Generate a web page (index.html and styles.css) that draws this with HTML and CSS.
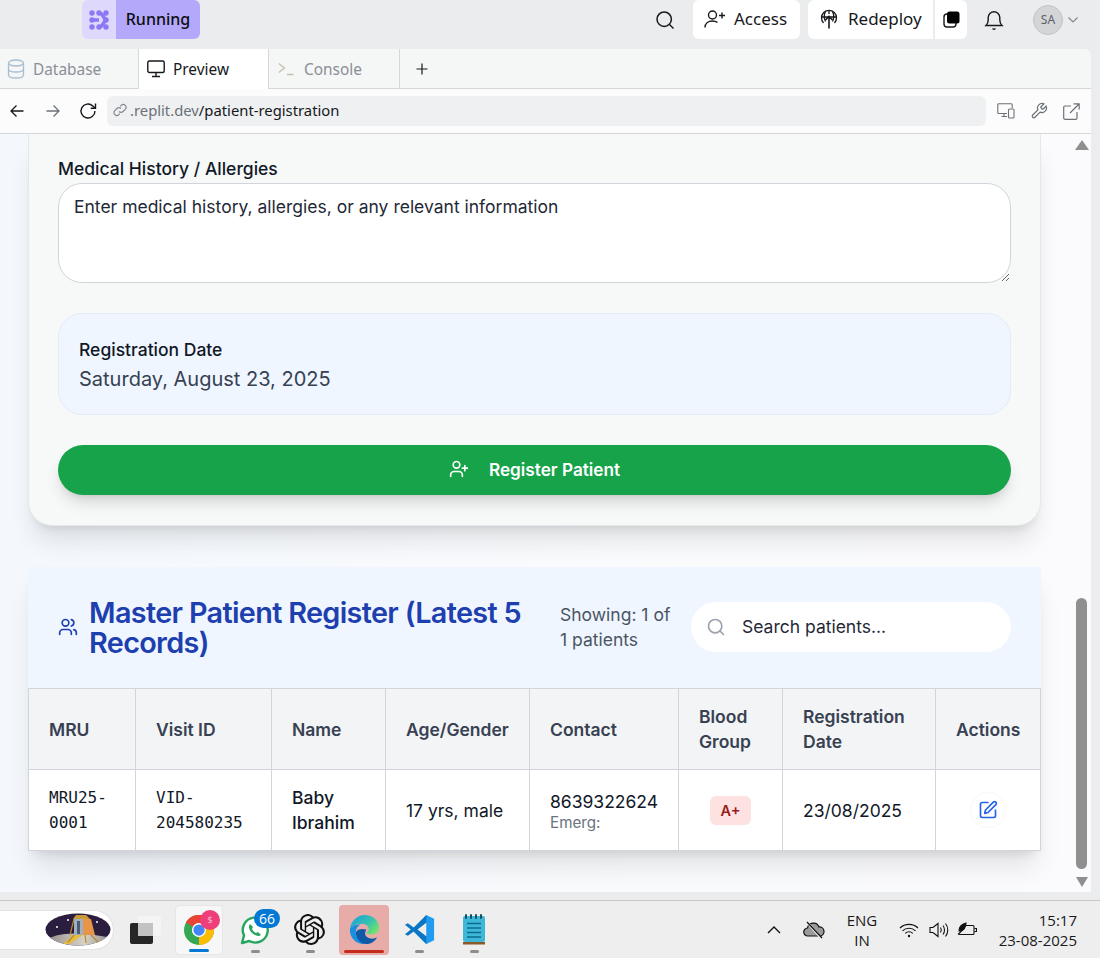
FILE: index.html
```html
<!DOCTYPE html>
<html lang="en">
<head>
  <meta charset="UTF-8" />
  <title>Patient Registration</title>
  <link rel="stylesheet" href="styles.css">
</head>
<body>
  <header class="topbar">
    <div class="run-group">
      <span class="run-logo">
        <svg width="20" height="20" viewBox="0 0 20 20" fill="#8b78f5">
          <circle cx="3" cy="3" r="2.700"/><circle cx="10" cy="3" r="2.700"/><circle cx="17" cy="3" r="2.700"/>
          <circle cx="3" cy="10" r="2.700"/><circle cx="17" cy="10" r="2.700"/>
          <circle cx="3" cy="17" r="2.700"/><circle cx="10" cy="17" r="2.700"/><circle cx="17" cy="17" r="2.700"/>
          <path d="M10 3c4 0 3.500 4 7 7-3.500 3-3 7-7 7M3 10h7" fill="none" stroke="#8b78f5" stroke-width="3.600"/>
        </svg>
      </span>
      <span class="run-label">Running</span>
    </div>
    <div class="top-actions">
      <svg class="top-search" width="20" height="20" viewBox="0 0 20 20" fill="none" stroke="#16181c" stroke-width="1.5"><circle cx="9.200" cy="9.200" r="7.200"/><path d="M14.500 14.500l4 4"/></svg>
      <button class="top-btn access">
        <svg width="22" height="20" viewBox="0 0 22 20" fill="none" stroke="#16181c" stroke-width="1.400"><circle cx="8.500" cy="6" r="4"/><path d="M1 18.500c0-4 3-6.500 7.500-6.500 2 0 3.600.5 5 1.400"/><path d="M15 6.500h6M18 3.500v6"/></svg>
        Access
      </button>
      <div class="deploy-group">
        <button class="top-btn redeploy">
          <svg width="18" height="20" viewBox="0 0 18 20" fill="none" stroke="#16181c" stroke-width="1.300"><path d="M3.500 14a7.500 7.500 0 1 1 11 0"/><path d="M1.500 8h15M5.500 2.500c-1.500 3-1.500 7 0 10M12.500 2.500c1.500 3 1.500 7 0 10M9 1v4"/><path d="M9 19.500V7.500M5.500 11L9 7.500l3.500 3.500" stroke-width="1.600"/></svg>
          Redeploy
        </button>
        <button class="top-btn stack">
          <svg width="17" height="17" viewBox="0 0 17 17"><rect x="1" y="3" width="12" height="13" rx="3" fill="#fff" stroke="#16181c" stroke-width="1.400"/><rect x="4" y="0.500" width="12.500" height="12" rx="2.500" fill="#000"/></svg>
        </button>
      </div>
      <svg class="bell" width="20" height="22" viewBox="0 0 20 22" fill="none" stroke="#16181c" stroke-width="1.400"><path d="M2 16.500c1.500-1.500 2.200-3 2.200-5.500V8.500a5.800 5.800 0 0 1 11.600 0V11c0 2.500.7 4 2.200 5.500z"/><path d="M8.500 19.500c.5 1 2.500 1 3 0"/></svg>
      <span class="avatar">SA</span>
      <svg class="caret" width="10" height="6" viewBox="0 0 10 6" fill="none" stroke="#80858d" stroke-width="1.100"><path d="M.5.500L5 5 9.500.5"/></svg>
    </div>
  </header>

  <div class="frame">
    <nav class="tabs">
      <div class="tab tab-db">
        <svg width="18" height="20" viewBox="0 0 18 20" fill="none" stroke="#a9bed3" stroke-width="1.300"><ellipse cx="9" cy="4" rx="7.500" ry="3"/><path d="M1.500 4v12c0 1.700 3.400 3 7.500 3s7.500-1.300 7.500-3V4M1.500 10c0 1.700 3.400 3 7.500 3s7.500-1.300 7.500-3"/></svg>
        Database
      </div>
      <div class="tab tab-active">
        <svg width="18" height="18" viewBox="0 0 18 18" fill="none" stroke="#16181c" stroke-width="1.400"><rect x=".8" y="1" width="16.400" height="11.500" rx="1.500"/><path d="M9 12.500V16M5 16.500h8"/></svg>
        Preview
      </div>
      <div class="tab tab-console">
        <svg width="16" height="14" viewBox="0 0 16 14" fill="none" stroke="#c3c0ae" stroke-width="1.300"><path d="M.8 1.500L6.500 6 .8 10.500M9 12.500h6.500"/></svg>
        Console
      </div>
      <div class="tab-add">
        <svg width="12" height="12" viewBox="0 0 12 12" stroke="#16181c" stroke-width="1.200"><path d="M6 .5v11M.5 6h11"/></svg>
      </div>
    </nav>

    <div class="urlbar">
      <svg class="nav-icon" width="14" height="14" viewBox="0 0 14 14" fill="none" stroke="#16181c" stroke-width="1.300"><path d="M13.500 7H1M6.500 1.500L1 7l5.500 5.500"/></svg>
      <svg class="nav-icon nav-fwd" width="14" height="14" viewBox="0 0 14 14" fill="none" stroke="#6c7178" stroke-width="1.300"><path d="M.5 7H13M7.500 1.500L13 7l-5.500 5.500"/></svg>
      <svg class="nav-icon nav-reload" width="18" height="18" viewBox="0 0 18 18" fill="none" stroke="#16181c" stroke-width="1.400"><path d="M16 9a7 7 0 1 1-2.200-5.100L16 6"/><path d="M16.500 1.500V6.300h-4.800"/></svg>
      <div class="url-field">
        <svg width="14" height="14" viewBox="0 0 14 14" fill="none" stroke="#858a92" stroke-width="1.200"><path d="M6 8.500a2.800 2.800 0 0 0 4 0l2.200-2.200a2.800 2.800 0 0 0-4-4L7.200 3.300"/><path d="M8 5.500a2.800 2.800 0 0 0-4 0L1.800 7.700a2.800 2.800 0 0 0 4 4l1-1"/></svg>
        <span class="url-host">.replit.dev</span><span class="url-path">/patient-registration</span>
      </div>
      <div class="url-tools">
        <svg width="18" height="16" viewBox="0 0 18 16" fill="none" stroke="#6c7178" stroke-width="1.100"><path d="M10 10.500H1.800a1 1 0 0 1-1-1V1.700a1 1 0 0 1 1-1h12.400a1 1 0 0 1 1 1V5M7 11v2.500M4.500 13.500H10"/><rect x="11.500" y="6" width="5.500" height="9" rx="1"/></svg>
        <svg width="18" height="18" viewBox="0 0 24 24" fill="none" stroke="#6c7178" stroke-width="1.600"><path d="M14.700 6.300a1 1 0 0 0 0 1.400l1.600 1.600a1 1 0 0 0 1.400 0l3.770-3.770a6 6 0 0 1-7.940 7.940l-6.910 6.910a2.120 2.120 0 0 1-3-3l6.910-6.910a6 6 0 0 1 7.940-7.940z"/></svg>
        <svg width="17" height="17" viewBox="0 0 17 17" fill="none" stroke="#6c7178" stroke-width="1.200"><path d="M8 3H2a1.300 1.300 0 0 0-1.300 1.300V15A1.300 1.300 0 0 0 2 16.300h10.700A1.300 1.300 0 0 0 14 15V9M7 10L16 1M10.500.8h5.700v5.700"/></svg>
      </div>
    </div>

    <div class="viewport">
      <main class="page">
        <section class="form-card">
          <label class="field-label">Medical History / Allergies</label>
          <textarea class="history" placeholder="Enter medical history, allergies, or any relevant information"></textarea>
          <div class="date-box">
            <div class="date-label">Registration Date</div>
            <div class="date-value">Saturday, August 23, 2025</div>
          </div>
          <button class="submit">
            <svg width="20" height="20" viewBox="0 0 24 24" fill="none" stroke="#fff" stroke-width="2" stroke-linecap="round" stroke-linejoin="round"><path d="M16 21v-2a4 4 0 0 0-4-4H6a4 4 0 0 0-4 4v2"/><circle cx="9" cy="7" r="4"/><path d="M19 8v6M22 11h-6"/></svg>
            Register Patient
          </button>
        </section>

        <section class="register">
          <div class="register-head">
            <svg class="users" width="20" height="20" viewBox="0 0 24 24" fill="none" stroke="#1e40af" stroke-width="2" stroke-linecap="round" stroke-linejoin="round"><path d="M16 21v-2a4 4 0 0 0-4-4H6a4 4 0 0 0-4 4v2"/><circle cx="9" cy="7" r="4"/><path d="M22 21v-2a4 4 0 0 0-3-3.870M16 3.130a4 4 0 0 1 0 7.750"/></svg>
            <h2>Master Patient Register (Latest 5 Records)</h2>
            <p class="showing">Showing: 1 of 1 patients</p>
            <div class="search">
              <svg width="20" height="20" viewBox="0 0 24 24" fill="none" stroke="#9ca3af" stroke-width="2" stroke-linecap="round"><circle cx="11" cy="11" r="8"/><path d="M21 21l-4.300-4.300"/></svg>
              <span>Search patients...</span>
            </div>
          </div>
          <table class="patients">
            <colgroup>
              <col class="c-mru"><col class="c-visit"><col class="c-name"><col class="c-age">
              <col class="c-contact"><col class="c-blood"><col class="c-date"><col class="c-act">
            </colgroup>
            <thead>
              <tr>
                <th>MRU</th><th>Visit ID</th><th>Name</th><th>Age/Gender</th>
                <th>Contact</th><th>Blood Group</th><th>Registration Date</th><th>Actions</th>
              </tr>
            </thead>
            <tbody>
              <tr>
                <td class="mono">MRU25-0001</td>
                <td class="mono">VID-204580235</td>
                <td class="name">Baby Ibrahim</td>
                <td>17 yrs, male</td>
                <td class="contact">8639322624<small>Emerg:</small></td>
                <td class="blood"><span class="blood-tag">A+</span></td>
                <td>23/08/2025</td>
                <td class="actions">
                  <span class="edit-btn">
                    <svg width="20" height="20" viewBox="0 0 24 24" fill="none" stroke="#2563eb" stroke-width="2" stroke-linecap="round" stroke-linejoin="round"><path d="M12 3H5a2 2 0 0 0-2 2v14a2 2 0 0 0 2 2h14a2 2 0 0 0 2-2v-7"/><path d="M18.400 2.600a2.120 2.120 0 0 1 3 3L12 15l-4 1 1-4z"/></svg>
                  </span>
                </td>
              </tr>
            </tbody>
          </table>
        </section>
      </main>
      <aside class="scroll">
        <span class="arrow-up"></span>
        <span class="thumb"></span>
        <span class="arrow-down"></span>
      </aside>
    </div>
  </div>

  <footer class="taskbar">
    <div class="search-pill">
      <svg width="66" height="33" viewBox="0 0 66 33">
        <defs>
          <clipPath id="moonClip"><ellipse cx="33" cy="16.500" rx="32.500" ry="16"/></clipPath>
          <linearGradient id="moonGrad" x1="0" y1="0" x2="1" y2="0"><stop offset="0" stop-color="#8e8a8a"/><stop offset=".6" stop-color="#d8d2c6"/><stop offset="1" stop-color="#8d8a8c"/></linearGradient>
        </defs>
        <g clip-path="url(#moonClip)">
          <rect width="66" height="33" fill="#2a1d3d"/>
          <path d="M0 28C8 21 30 17 66 25v8H0z" fill="url(#moonGrad)"/>
          <circle cx="12" cy="14" r="1" fill="#fff"/><circle cx="23" cy="7" r="1" fill="#fff"/><circle cx="52" cy="9" r="1" fill="#fff"/>
          <path d="M31 2h10l4 4H28z" fill="#c99a3a"/>
          <path d="M38 6h8l4 16H38z" fill="#e8954a"/>
          <rect x="29" y="6" width="9" height="16" fill="#9fb0c0"/>
          <rect x="32" y="8" width="3" height="13" fill="#4d5b73"/>
          <path d="M28 22h10L24 31h-6z" fill="#e6bb3c"/>
          <path d="M29 6l-4 16M29 22l-6 7M46 22l8 8M40 22l1 8" stroke="#b98a2c" stroke-width="1.200" fill="none"/>
        </g>
      </svg>
    </div>
    <svg class="task-view" width="32" height="32" viewBox="0 0 32 32">
      <rect x="0" y="9" width="23" height="21" rx="2" fill="#262626"/>
      <rect x="8" y="2" width="23" height="20" rx="2" fill="#f4f4f4"/>
      <rect x="8" y="9" width="15" height="13" fill="#c2c2c2"/>
    </svg>
    <div class="apps">
      <div class="app app-chrome">
        <svg width="30" height="30" viewBox="0 0 32 32" fill="none">
          <circle cx="16" cy="16" r="11.500" stroke="#34a853" stroke-width="9"/>
          <path d="M6 10.200A11.500 11.500 0 0 1 26 10.200" stroke="#ea4335" stroke-width="9"/>
          <path d="M26 10.200A11.500 11.500 0 0 1 16 27.500" stroke="#fbbc04" stroke-width="9"/>
          <circle cx="16" cy="16" r="7.500" fill="#fff"/>
          <circle cx="16" cy="16" r="6" fill="#4285f4"/>
        </svg>
        <span class="dot-badge">$</span>
        <span class="pin pin-blue"></span>
      </div>
      <div class="app app-plain">
        <svg width="32" height="32" viewBox="0 0 32 32" fill="none">
          <path d="M3 29l2-7.500A12.500 12.500 0 1 1 10.200 27z" fill="#fff" stroke="#25a55f" stroke-width="2.400" stroke-linejoin="round"/>
          <path d="M11 10c-2 2-1 6 2 9s7 4 9 2l-3-3-2 1c-2-1-3-2-4-4l1-2z" fill="#25a55f"/>
        </svg>
        <span class="count-badge">66</span>
        <span class="pin"></span>
      </div>
      <div class="app app-plain">
        <svg width="31" height="31" viewBox="0 0 24 24" fill="#111">
          <path d="M22.282 9.821a5.985 5.985 0 0 0-.516-4.91 6.046 6.046 0 0 0-6.51-2.9A6.065 6.065 0 0 0 4.981 4.18a5.985 5.985 0 0 0-3.998 2.9 6.046 6.046 0 0 0 .743 7.097 5.98 5.98 0 0 0 .51 4.911 6.051 6.051 0 0 0 6.515 2.9A5.985 5.985 0 0 0 13.26 24a6.056 6.056 0 0 0 5.772-4.206 5.99 5.99 0 0 0 3.997-2.9 6.056 6.056 0 0 0-.747-7.073zM13.26 22.43a4.476 4.476 0 0 1-2.876-1.04l.141-.081 4.779-2.758a.795.795 0 0 0 .392-.681v-6.737l2.02 1.168a.071.071 0 0 1 .038.052v5.583a4.504 4.504 0 0 1-4.494 4.494zM3.6 18.304a4.47 4.47 0 0 1-.535-3.014l.142.085 4.783 2.759a.771.771 0 0 0 .78 0l5.843-3.369v2.332a.08.08 0 0 1-.033.062L9.74 19.95a4.5 4.5 0 0 1-6.14-1.646zM2.34 7.896a4.485 4.485 0 0 1 2.366-1.973V11.6a.766.766 0 0 0 .388.676l5.815 3.355-2.02 1.168a.076.076 0 0 1-.071 0l-4.83-2.786A4.504 4.504 0 0 1 2.34 7.872zm16.597 3.855l-5.833-3.387L15.119 7.2a.076.076 0 0 1 .071 0l4.83 2.791a4.494 4.494 0 0 1-.676 8.105v-5.678a.79.79 0 0 0-.407-.667zm2.01-3.023l-.141-.085-4.774-2.782a.776.776 0 0 0-.785 0L9.409 9.23V6.897a.066.066 0 0 1 .028-.061l4.83-2.787a4.5 4.5 0 0 1 6.68 4.66zm-12.64 4.135l-2.02-1.164a.08.08 0 0 1-.038-.057V6.075a4.5 4.5 0 0 1 7.375-3.453l-.142.08L8.704 5.46a.795.795 0 0 0-.393.681zm1.097-2.365l2.602-1.5 2.607 1.5v2.999l-2.597 1.5-2.607-1.5z"/>
        </svg>
        <span class="pin"></span>
      </div>
      <div class="app app-edge">
        <svg width="31" height="31" viewBox="0 0 32 32">
          <defs><linearGradient id="edgeTop" x1="0" y1="0" x2="1" y2=".7"><stop offset="0" stop-color="#1b9de2"/><stop offset=".6" stop-color="#35c1b0"/><stop offset="1" stop-color="#6fe36a"/></linearGradient></defs>
          <path d="M1 15C2 7 9 1 16 1c9 0 15 6 15 13 0 5-4 7-8 7-3 0-5-1-5-2 2-1 3-3 2-5-1-3-4-4-7-4-5 0-9 2-12 5z" fill="url(#edgeTop)"/>
          <path d="M1 15c2-3 7-5 11-4-3 1-5 4-5 8 0 5 4 10 10 12-1 0-1 0-2 0C7 31 0 24 1 15z" fill="#1a8fe0"/>
          <path d="M7 19c0 6 5 12 11 12 5 0 9-3 11-7-3 2-7 2-10 0-3-2-3-5-1-8-4-1-9-1-11 3z" fill="#0f5aa8"/>
        </svg>
        <span class="pin pin-red"></span>
      </div>
      <div class="app app-plain app-vs">
        <svg width="31" height="31" viewBox="0 0 32 32">
          <path d="M23 1l8 4v22l-8 4-13-13z" fill="#1f9cf0"/>
          <path d="M23 1L10 14 4 9.500 1 11l6 5-6 5 3 1.500L10 18l13 13z" fill="#0a76c4"/>
          <path d="M23 9v14l-9-7z" fill="#eeeeee"/>
        </svg>
        <span class="pin"></span>
      </div>
      <div class="app app-plain app-note">
        <svg width="24" height="32" viewBox="0 0 24 32">
          <rect x="1" y="2" width="22" height="26" rx="2" fill="#3fb7d8"/>
          <path d="M1 28h22v2.500H1z" fill="#8b5a2b"/>
          <path d="M5 9.500h14M5 14h14M5 18.500h14M5 23h14" stroke="#0b6d8c" stroke-width="1.600"/>
          <path d="M4 1v3M9 1v3M14 1v3M19 1v3" stroke="#13505f" stroke-width="2" stroke-linecap="round"/>
        </svg>
        <span class="pin"></span>
      </div>
    </div>
    <div class="tray">
      <svg class="tray-caret" width="14" height="8" viewBox="0 0 14 8" fill="none" stroke="#111" stroke-width="1.400"><path d="M1 7l6-6 6 6"/></svg>
      <svg class="tray-cloud" width="22" height="18" viewBox="0 0 22 18"><path d="M5 15a4 4 0 0 1-.5-8A6 6 0 0 1 16 6a4.500 4.500 0 0 1 1 9z" fill="#9a9a9a" stroke="#111" stroke-width="1.200"/><path d="M4 1l14 16" stroke="#eee" stroke-width="2.600"/><path d="M4 1l15 16" stroke="#111" stroke-width="1.200"/></svg>
      <div class="lang">ENG<br>IN</div>
      <svg class="tray-wifi" width="20" height="16" viewBox="0 0 20 16" fill="none" stroke="#111" stroke-width="1.100"><path d="M1 6a13 13 0 0 1 18 0M3.500 8.800a9.500 9.500 0 0 1 13 0M6.200 11.300a5.500 5.500 0 0 1 7.600 0"/><circle cx="10" cy="14" r="1.200" fill="#111" stroke="none"/></svg>
      <svg class="tray-vol" width="20" height="16" viewBox="0 0 20 16" fill="none" stroke="#111" stroke-width="1.100"><path d="M1 5.500h3L9 1.500v13l-5-4H1z"/><path d="M11.500 5.500c1 1.500 1 3.500 0 5M14 3.500c2 2.500 2 6.500 0 9M16.500 1.500c3 3.500 3 9.500 0 13"/></svg>
      <svg class="tray-batt" width="20" height="16" viewBox="0 0 20 16" fill="none" stroke="#111" stroke-width="1.100"><path d="M9 3.500h7a1 1 0 0 1 1 1v7a1 1 0 0 1-1 1H2"/><path d="M17.500 6.500h2v3h-2"/><path d="M2 9C2 5 5 2 9 1c0 4-2 7-6 8z" fill="#111"/><path d="M1 12.500l6-6"/></svg>
      <div class="clock"><div>15:17</div><div>23-08-2025</div></div>
    </div>
  </footer>
</body>
</html>
```

FILE: styles.css
```css
* {
  box-sizing: border-box;
}

html,
body {
  margin: 0;
  height: 958px;
  overflow: hidden;
}

body {
  display: flex;
  flex-direction: column;
  background: #ebecee;
  font-family: 'Inter', sans-serif;
  color: #111827;
}

button {
  border: none;
  font: inherit;
}

/* top bar */
.topbar {
  height: 49px;
  flex: none;
  display: flex;
  justify-content: space-between;
  font-family: 'Noto Sans', sans-serif;
  padding: 0 22px 10px 82px;
}

.run-group {
  display: flex;
}

.run-logo {
  width: 34px;
  background: #ded9fc;
  border-radius: 6px 0 0 6px;
  display: flex;
  align-items: center;
  justify-content: center;
}

.run-label {
  width: 84px;
  background: #b4a8fb;
  border-radius: 0 6px 6px 0;
  display: flex;
  align-items: center;
  justify-content: center;
  padding-bottom: 2px;
  font-size: 16px;
  font-weight: 500;
  color: #0c0d10;
}

.top-actions {
  display: flex;
  align-items: center;
}

.top-search {
  margin-right: 18px;
}

.top-btn {
  height: 39px;
  background: #fff;
  display: flex;
  align-items: center;
  gap: 8px;
  color: #16181c;
  font-size: 17px;
  padding: 0;
}

.access {
  width: 107px;
  border-radius: 6px;
  padding: 0 0 2px 11px;
  margin-right: 8px;
}

.deploy-group {
  display: flex;
  gap: 2px;
  margin-right: 17px;
}

.redeploy {
  width: 125px;
  border-radius: 6px 0 0 6px;
  padding: 0 0 2px 12px;
  gap: 10px;
}

.stack {
  width: 32px;
  border-radius: 0 6px 6px 0;
  justify-content: center;
}

.avatar {
  width: 30px;
  height: 30px;
  margin-left: 29px;
  border-radius: 50%;
  background: #d4d5d7;
  border: 1px solid #c2c3c6;
  color: #5c6067;
  font-size: 12px;
  display: flex;
  align-items: center;
  justify-content: center;
}

.caret {
  margin-left: 5px;
}

/* replit pane */
.frame {
  width: 1091px;
  height: 843px;
  flex: none;
  display: flex;
  flex-direction: column;
  background: #f5f6f6;
  border-radius: 0 6px 0 0;
  font-family: 'Noto Sans', sans-serif;
}

.tabs {
  height: 40px;
  flex: none;
  display: flex;
  border-bottom: 1px solid #d6d7d9;
}

.tab {
  display: flex;
  align-items: center;
  gap: 8px;
  font-size: 15.400px;
  color: #8a8f96;
  border-right: 1px solid #d6d7d9;
  height: 40px;
}

.tab-db {
  width: 139px;
  padding-left: 7px;
}

.tab-active {
  width: 130px;
  padding-left: 8px;
  background: #fff;
  color: #16181c;
}

.tab-console {
  width: 131px;
  padding-left: 9px;
  gap: 10px;
}

.tab-add {
  width: 44px;
  display: flex;
  align-items: center;
  justify-content: center;
}

.urlbar {
  height: 45px;
  flex: none;
  background: #fcfcfc;
  border-bottom: 1px solid #d6d7d9;
  display: flex;
  align-items: center;
  padding: 0 11px 0 10px;
}

.nav-icon {
  margin-right: 22px;
}

.nav-fwd {
  margin-right: 19px;
}

.nav-reload {
  margin-right: 10px;
}

.url-field {
  width: 879px;
  height: 30px;
  background: #eff0f2;
  border-radius: 6px;
  display: flex;
  align-items: center;
  padding: 0 0 2px 6px;
  font-size: 14.800px;
  gap: 3px;
}

.url-host {
  color: #6c7178;
}

.url-path {
  color: #16181c;
  margin-left: -3px;
}

.url-tools {
  flex: 1;
  display: flex;
  align-items: center;
  justify-content: space-between;
  padding-left: 11px;
}

/* preview */
.viewport {
  flex: 1;
  min-height: 0;
  display: flex;
  background: linear-gradient(90deg, #f4f8fd 0, #fafbfd 60%, #fbfbfd 100%);
  font-family: 'Inter', sans-serif;
  overflow: hidden;
}

.page {
  width: 1075px;
  padding-left: 28px;
  flex: none;
}

.form-card {
  width: 1013px;
  height: 392px;
  background: #f7f8f8;
  border: 1px solid #e5e7eb;
  border-top: none;
  border-radius: 0 0 24px 24px;
  box-shadow: 0 20px 25px -5px rgba(0, 0, 0, .1), 0 8px 10px -6px rgba(0, 0, 0, .1);
  padding: 23px 29px 0;
}

.field-label {
  display: block;
  font-size: 17.500px;
  font-weight: 500;
  line-height: 24px;
  margin-bottom: 2px;
}

.history {
  display: block;
  width: 100%;
  height: 100px;
  border: 1px solid #d1d5db;
  border-radius: 24px;
  padding: 11px 15px;
  background: #fff;
  font: 17.500px/24px 'Inter', sans-serif;
}

.history::placeholder {
  color: #1f2937;
  opacity: 1;
}

.date-box {
  height: 102px;
  margin-top: 30px;
  background: #eff6ff;
  border: 1px solid #e3ebf5;
  border-radius: 24px;
  padding: 23px 20px;
}

.date-label {
  font-size: 17.500px;
  font-weight: 500;
  line-height: 26px;
}

.date-value {
  font-size: 20px;
  line-height: 32px;
  color: #374151;
}

.submit {
  width: 100%;
  height: 50px;
  margin-top: 30px;
  padding: 0 0 2px;
  background: #16a34a;
  border-radius: 25px;
  color: #fff;
  font-size: 17.200px;
  font-weight: 600;
  display: flex;
  align-items: center;
  justify-content: center;
  gap: 20px;
  box-shadow: 0 10px 15px -3px rgba(0, 0, 0, .15), 0 4px 6px -4px rgba(0, 0, 0, .1);
}

.register {
  width: 1013px;
  margin-top: 41px;
  background: #fff;
  box-shadow: 0 20px 25px -5px rgba(0, 0, 0, .1), 0 8px 10px -6px rgba(0, 0, 0, .1);
}

.register-head {
  height: 121px;
  background: #eff6ff;
  display: flex;
  align-items: center;
  padding: 0 30px 2px;
}

.users {
  flex: none;
  margin-right: 11px;
}

.register-head h2 {
  width: 471px;
  flex: none;
  margin: 2px 0 0;
  font-size: 28.800px;
  line-height: 30px;
  font-weight: 600;
  letter-spacing: -0.66px;
  color: #1e40af;
}

.showing {
  width: 131px;
  flex: none;
  margin: 0;
  padding-right: 15px;
  font-size: 17.500px;
  line-height: 25px;
  color: #4b5563;
}

.search {
  flex: 1;
  height: 50px;
  background: #fff;
  border-radius: 25px;
  display: flex;
  align-items: center;
  gap: 16px;
  padding-left: 15px;
  font-size: 17.500px;
  color: #1f2937;
}

.patients {
  width: 1012px;
  table-layout: fixed;
  border-collapse: collapse;
  font-size: 17.500px;
  line-height: 25px;
}

.c-mru { width: 107px; }
.c-visit { width: 136px; }
.c-name { width: 114px; }
.c-age { width: 144px; }
.c-contact { width: 149px; }
.c-blood { width: 104px; }
.c-date { width: 153px; }
.c-act { width: 105px; }

.patients th,
.patients td {
  border: 1px solid #d1d5db;
  padding: 0 20px;
  height: 81px;
  text-align: left;
  vertical-align: middle;
}

.patients th {
  background: #f3f4f6;
  font-weight: 600;
  color: #374151;
}

.patients td {
  background: #fff;
  color: #111827;
}

.patients td.mono {
  font-family: 'DejaVu Sans Mono', monospace;
  font-size: 16px;
}

.patients td.name {
  font-weight: 500;
}

.contact small {
  display: block;
  font-size: 15.200px;
  line-height: 18px;
  color: #6b7280;
}

.patients td.blood,
.patients td.actions {
  text-align: center;
  padding: 0;
}

.blood-tag {
  display: inline-block;
  width: 41px;
  height: 29px;
  line-height: 29px;
  background: #fee2e2;
  border-radius: 6px;
  color: #991b1b;
  font-size: 14.500px;
  font-weight: 600;
}

.edit-btn {
  display: inline-flex;
  width: 36px;
  height: 36px;
  align-items: center;
  justify-content: center;
  border: 1px solid #f7f8f9;
  border-radius: 50%;
  vertical-align: middle;
}

/* scrollbar */
.scroll {
  width: 13px;
  flex: none;
  display: flex;
  flex-direction: column;
  align-items: center;
  padding-top: 6px;
}

.arrow-up {
  border-left: 7px solid transparent;
  border-right: 7px solid transparent;
  border-bottom: 10px solid #8f8f8f;
  margin-bottom: 448px;
}

.thumb {
  width: 11px;
  height: 271px;
  background: #8f8f8f;
  border-radius: 6px;
}

.arrow-down {
  margin-top: 8px;
  border-left: 6px solid transparent;
  border-right: 6px solid transparent;
  border-top: 10px solid #8f8f8f;
}

/* windows taskbar */
.taskbar {
  height: 58px;
  margin-top: 8px;
  flex: none;
  background: #eeeeee;
  border-top: 1px solid #c8c8c8;
  display: flex;
  align-items: center;
  font-family: 'Open Sans', sans-serif;
  color: #1a1a1a;
}

.search-pill {
  width: 114px;
  height: 40px;
  flex: none;
  background: #fff;
  border-radius: 0 20px 20px 0;
  border: 1px solid #e2e2e2;
  border-left: none;
  display: flex;
  align-items: center;
  justify-content: flex-end;
  padding-right: 2px;
}

.task-view {
  margin-left: 16px;
  flex: none;
}

.apps {
  display: flex;
  align-items: center;
  margin-left: 13px;
}

.app {
  position: relative;
  width: 50px;
  height: 50px;
  display: flex;
  align-items: center;
  justify-content: center;
  border-radius: 4px;
}

.app-chrome {
  background: #f7f7f7;
  width: 48px;
  border: 1px solid #e6e6e6;
  margin-right: 4px;
}

.app-plain {
  width: 55px;
}

.app-edge {
  background: #e8aca8;
  margin-left: 2px;
}

.app-vs {
  width: 60px;
}

.app-note {
  width: 50px;
}

.pin {
  position: absolute;
  bottom: 2px;
  left: 50%;
  width: 9px;
  height: 3px;
  margin-left: -4px;
  border-radius: 2px;
  background: #8d8d8d;
}

.pin-blue {
  width: 20px;
  margin-left: -10px;
  background: #0078d4;
}

.pin-red {
  width: 40px;
  margin-left: -20px;
  background: #c42b1c;
}

.dot-badge {
  position: absolute;
  top: 4px;
  right: 2px;
  width: 20px;
  height: 20px;
  border-radius: 50%;
  background: #ee3f7a;
  color: #f9c4d6;
  font-size: 9px;
  display: flex;
  align-items: center;
  justify-content: center;
}

.count-badge {
  position: absolute;
  top: 4px;
  right: 2px;
  width: 26px;
  height: 19px;
  border-radius: 10px;
  background: #0078d4;
  color: #fff;
  font-size: 14px;
  display: flex;
  align-items: center;
  justify-content: center;
}

.tray {
  flex: 1;
  display: flex;
  align-items: center;
  padding-left: 268px;
}

.tray-cloud {
  margin-left: 22px;
}

.lang {
  width: 40px;
  margin-left: 17px;
  text-align: center;
  font-size: 15px;
  line-height: 20px;
}

.tray-wifi {
  margin-left: 17px;
}

.tray-vol {
  margin-left: 10px;
}

.tray-batt {
  margin-left: 8px;
}

.clock {
  margin-left: auto;
  margin-right: 23px;
  text-align: right;
  font-size: 15px;
  line-height: 20px;
}
```
